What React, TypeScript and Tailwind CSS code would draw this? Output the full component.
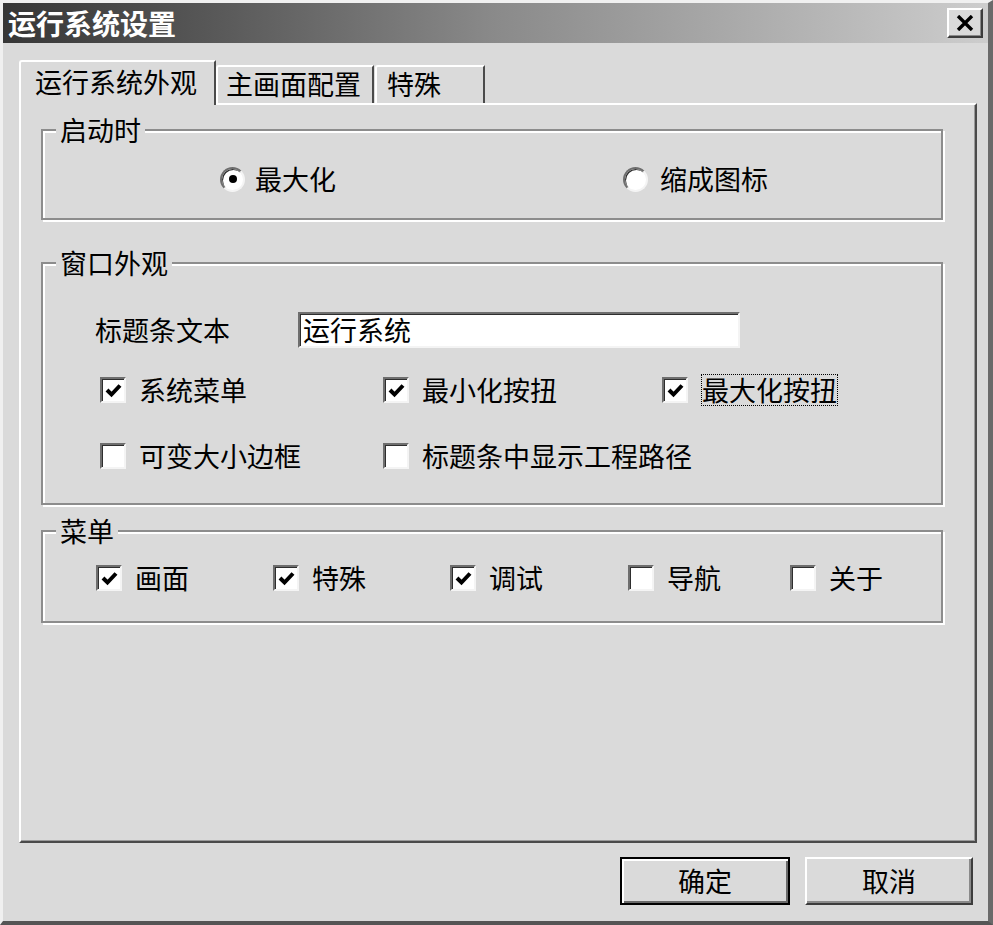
import React from "react";

const font = "font-['Noto_Sans_CJK_SC',sans-serif]";

// sunken 3D box used by checkbox / radio / edit
const sunken =
  "border-2 border-t-[#6e6e6e] border-l-[#6e6e6e] border-r-[#f4f4f4] border-b-[#f4f4f4] shadow-[inset_1px_1px_0_#2e2e2e] bg-white";

const CheckBox = ({ checked }: { checked?: boolean }) => (
  <span
    className={`flex h-[26px] w-[26px] shrink-0 items-center justify-center ${sunken}`}
  >
    {checked && (
      <svg width="17" height="15" viewBox="0 0 17 15">
        <path
          d="M2 7 L6.5 11.5 L15 2.5"
          stroke="#000"
          strokeWidth="4"
          fill="none"
        />
      </svg>
    )}
  </span>
);

const Radio = ({ checked }: { checked?: boolean }) => (
  <span
    className={`flex h-[25px] w-[25px] shrink-0 items-center justify-center rounded-full ${sunken}`}
  >
    {checked && <span className="h-[8px] w-[8px] rounded-full bg-black" />}
  </span>
);

const Option = ({
  label,
  checked,
  focused,
}: {
  label: string;
  checked?: boolean;
  focused?: boolean;
}) => (
  <div className="flex h-[30px] items-center gap-[13px] whitespace-nowrap">
    <CheckBox checked={checked} />
    <span
      className={
        focused
          ? "border border-dotted border-black leading-[30px]"
          : "leading-[30px]"
      }
    >
      {label}
    </span>
  </div>
);

// etched group box
const Group = ({
  title,
  className = "",
  children,
}: {
  title: string;
  className?: string;
  children: React.ReactNode;
}) => (
  <fieldset
    className={`ml-[20px] w-[902px] border-2 border-[#8c8c8c] shadow-[inset_2px_2px_0_#fff,2px_2px_0_#fff] ${className}`}
  >
    <legend className="ml-[13px] bg-[#dadada] px-[4px] text-[27px] leading-[28px]">
      {title}
    </legend>
    {children}
  </fieldset>
);

export default function App() {
  return (
    <div
      className={`flex h-[925px] w-[993px] flex-col border-t-[3px] border-l-[3px] border-r-[5px] border-b-[4px] border-t-[#f0f0f0] border-l-[#f0f0f0] border-r-[#6a6a6a] border-b-[#555] bg-[#dadada] text-black ${font}`}
    >
      {/* title bar */}
      <div className="flex h-[40px] shrink-0 items-center justify-between bg-linear-to-r from-[#363636] via-[#8a8a8a] to-[#cdcdcd] pl-[5px] pr-[5px]">
        <span className="text-[28px] font-bold leading-[30px] text-white">
          运行系统设置
        </span>
        <button className="flex h-[30px] w-[36px] items-center justify-center border-2 border-t-white border-l-white border-r-[#3c3c3c] border-b-[#3c3c3c] bg-[#dadada] shadow-[inset_-1px_-1px_0_#8a8a8a]">
          <svg width="18" height="16" viewBox="0 0 18 16">
            <path
              d="M2 1 L16 15 M16 1 L2 15"
              stroke="#000"
              strokeWidth="3.4"
            />
          </svg>
        </button>
      </div>

      {/* tabs */}
      <div className="mt-[17px] ml-[16px] flex h-[43px] items-end">
        <div className="relative z-10 -mb-[2px] h-[45px] w-[197px] rounded-tl-[3px] border-t-2 border-l-2 border-r-2 border-t-white border-l-white border-r-[#4a4a4a] bg-[#dadada] pt-[6px] pl-[14px] text-[27px] leading-[28px]">
          运行系统外观
        </div>
        <div className="h-[38px] w-[158px] rounded-tl-[3px] border-t-2 border-l-2 border-r-2 border-t-white border-l-white border-r-[#4a4a4a] pt-[3px] pl-[8px] text-[27px] leading-[28px]">
          主画面配置
        </div>
        <div className="ml-[1px] h-[38px] w-[110px] rounded-tl-[3px] border-t-2 border-l-2 border-r-2 border-t-white border-l-white border-r-[#4a4a4a] pt-[3px] pl-[10px] text-[27px] leading-[28px]">
          特殊
        </div>
      </div>

      {/* tab panel */}
      <div className="ml-[16px] flex h-[740px] w-[958px] flex-col border-2 border-t-white border-l-white border-r-[#4a4a4a] border-b-[#4a4a4a] shadow-[inset_-1px_-1px_0_#9a9a9a] text-[27px]">
        <Group title="启动时" className="mt-[11px]">
          <div className="flex pt-[20px] pb-[24px] pl-[177px]">
            <div className="flex h-[30px] w-[403px] items-center gap-[10px]">
              <Radio checked />
              <span className="leading-[30px]">最大化</span>
            </div>
            <div className="flex h-[30px] items-center gap-[12px]">
              <Radio />
              <span className="leading-[30px]">缩成图标</span>
            </div>
          </div>
        </Group>

        <Group title="窗口外观" className="mt-[29px]">
          <div className="flex h-[36px] items-center mt-[35px] pl-[52px]">
            <span className="w-[203px] leading-[30px]">标题条文本</span>
            <div
              className={`flex h-[36px] w-[442px] items-center pl-[3px] ${sunken}`}
            >
              <span className="leading-[30px]">运行系统</span>
            </div>
          </div>
          <div className="mt-[27px] grid grid-cols-[283px_279px_auto] gap-y-[36px] pb-[32px] pl-[57px]">
            <Option label="系统菜单" checked />
            <Option label="最小化按扭" checked />
            <Option label="最大化按扭" checked focused />
            <Option label="可变大小边框" />
            <Option label="标题条中显示工程路径" />
          </div>
        </Group>

        <Group title="菜单" className="mt-[12px]">
          <div className="mt-[18px] flex pb-[28px] pl-[53px]">
            <div className="w-[177px]">
              <Option label="画面" checked />
            </div>
            <div className="w-[177px]">
              <Option label="特殊" checked />
            </div>
            <div className="w-[178px]">
              <Option label="调试" checked />
            </div>
            <div className="w-[162px]">
              <Option label="导航" />
            </div>
            <Option label="关于" />
          </div>
        </Group>
      </div>

      {/* buttons */}
      <div className="mt-[14px] flex justify-end gap-[15px] pr-[15px]">
        <button className="h-[48px] w-[170px] border-2 border-black bg-[#dadada] text-[27px] leading-[30px] shadow-[inset_2px_2px_0_#fff,inset_-2px_-2px_0_#6a6a6a]">
          确定
        </button>
        <button className="h-[48px] w-[168px] border-2 border-t-white border-l-white border-r-[#3c3c3c] border-b-[#3c3c3c] bg-[#dadada] text-[27px] leading-[30px] shadow-[inset_-2px_-2px_0_#8a8a8a]">
          取消
        </button>
      </div>
    </div>
  );
}
